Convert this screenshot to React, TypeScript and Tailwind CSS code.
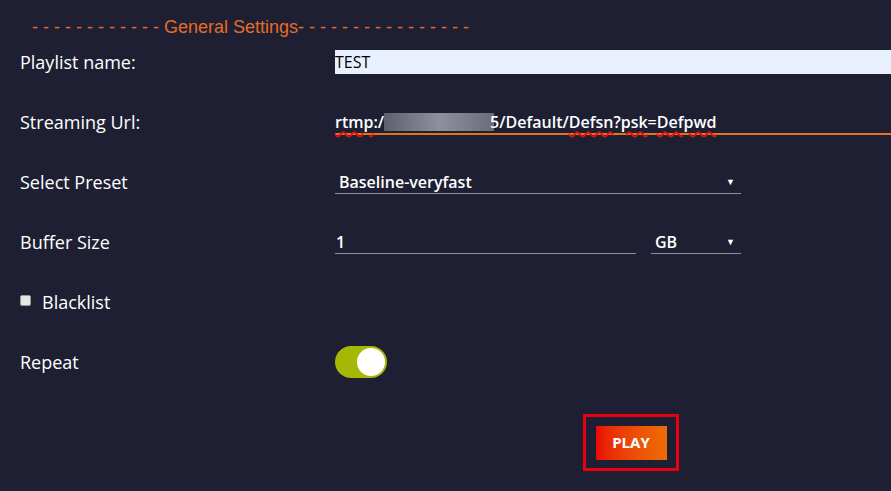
import React from "react";

const font = { fontFamily: '"Open Sans", "Noto Sans", sans-serif' };

const Row = ({ label, children }: { label: React.ReactNode; children?: React.ReactNode }) => (
  <div className="flex h-[60px] items-center">
    <div className="w-[315px] text-[18px] text-white">{label}</div>
    <div className="flex flex-1 items-center">{children}</div>
  </div>
);

const Arrow = () => <span className="text-[9px] leading-none text-white">▼</span>;

const Squiggle = ({ children }: { children: React.ReactNode }) => (
  <span className="underline decoration-wavy decoration-[#e01010] decoration-[1.5px] underline-offset-[3px]">
    {children}
  </span>
);

export default function App() {
  return (
    <div className="h-[491px] w-[891px] overflow-hidden bg-[#1e1f33] pl-[20px]" style={font}>
      <div
        className="h-[32px] pl-[12px] pt-[17px] text-[18px] leading-[20px] text-[#e56c25]"
        style={{ fontFamily: '"Liberation Sans", Arial, sans-serif' }}
      >
        - - - - - - - - - - - - General Settings- - - - - - - - - - - - - - - -
      </div>

      <Row label="Playlist name:">
        <div className="flex h-[24px] w-full items-center bg-[#e8f0fe] text-[16px] text-black">TEST</div>
      </Row>

      <Row label="Streaming Url:">
        <div className="flex h-[26px] w-full items-center border-b-2 border-[#e5701f] pt-[1px] text-[16px] font-semibold text-white">
          <Squiggle>rtmp</Squiggle>:/
          <span className="inline-block h-[18px] w-[110px] bg-gradient-to-r from-[#5e6070] via-[#8e909e] to-[#6a6c7c]" />
          <span className="-ml-[4px]">5/Default/</span>
          <Squiggle>Defsn</Squiggle>?<Squiggle>psk</Squiggle>=<Squiggle>Defpwd</Squiggle>
        </div>
      </Row>

      <Row label="Select Preset">
        <div className="flex h-[24px] w-[406px] items-center justify-between border-b border-[#8e8f9c] pl-[4px] pr-[6px] text-[16px] font-semibold text-white">
          <span>Baseline-veryfast</span>
          <Arrow />
        </div>
      </Row>

      <Row label="Buffer Size">
        <div className="flex h-[24px] w-[301px] items-center border-b border-[#8e8f9c] pl-[1px] text-[16px] font-semibold text-white">
          1
        </div>
        <div className="ml-[15px] flex h-[24px] w-[90px] items-center justify-between border-b border-[#8e8f9c] pl-[4px] pr-[6px] text-[16px] font-semibold text-white">
          <span>GB</span>
          <Arrow />
        </div>
      </Row>

      <Row
        label={
          <div className="flex items-center">
            <span className="mt-[-4px] inline-block h-[11px] w-[11px] rounded-[2px] border border-[#9a9a9a] bg-[#e6e6e6]" />
            <span className="ml-[11px]">Blacklist</span>
          </div>
        }
      />

      <Row label="Repeat">
        <div className="flex h-[32px] w-[52px] items-center justify-end rounded-full bg-[#a4b805] px-[2px]">
          <div className="h-[28px] w-[28px] rounded-full bg-white" />
        </div>
      </Row>

      <div className="ml-[563px] mt-[22px] flex h-[57px] w-[96px] items-center justify-center border-[3px] border-[#e8000f]">
        <div className="flex h-[34px] w-[71px] items-center justify-center bg-gradient-to-r from-[#e80505] to-[#ee6c05] text-[15px] font-bold text-white">
          PLAY
        </div>
      </div>
    </div>
  );
}
